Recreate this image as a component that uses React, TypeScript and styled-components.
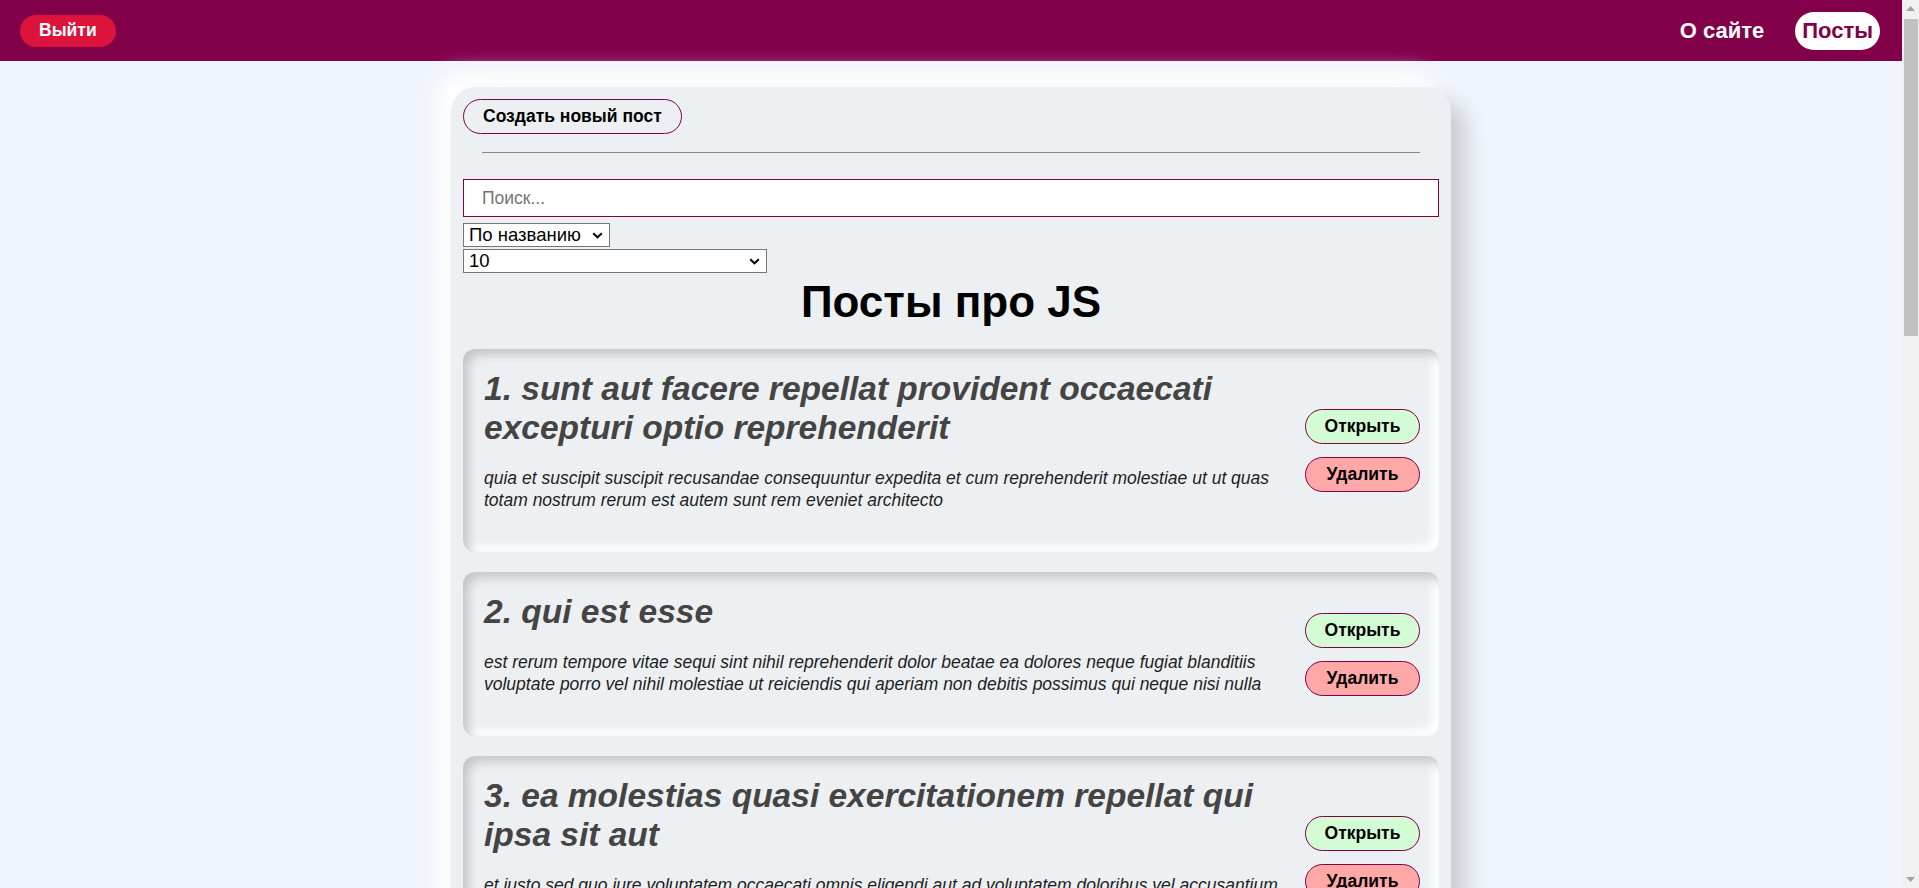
import React from "react";
import styled, { createGlobalStyle } from "styled-components";

const GlobalStyle = createGlobalStyle`
  html, body {
    margin: 0;
    padding: 0;
  }
  html::-webkit-scrollbar {
    display: none;
  }
  body {
    background: #f0f4fc;
    font-family: "Liberation Sans", Arial, sans-serif;
    color: #000;
  }
  * {
    box-sizing: border-box;
  }
`;

const MAROON = "#82004a";

const Shell = styled.div`
  display: flex;
  align-items: flex-start;
`;

const Page = styled.div`
  flex: 1;
  min-width: 0;
`;

const ScrollBar = styled.aside`
  position: sticky;
  top: 0;
  flex: 0 0 17px;
  height: 100vh;
  display: flex;
  flex-direction: column;
  background: #f1f1f1;
`;

const ScrollArrow = styled.div`
  height: 17px;
  display: flex;
  align-items: center;
  justify-content: center;
`;

const ScrollTrack = styled.div`
  flex: 1;
  padding: 2px 1px 0 2px;
`;

const ScrollThumb = styled.div`
  height: 317px;
  background: #c1c1c1;
`;

const Header = styled.header`
  height: 61px;
  background: ${MAROON};
  display: flex;
  align-items: center;
  justify-content: space-between;
  padding: 0 22px 0 20px;
`;

const LogoutButton = styled.button`
  height: 32px;
  padding: 0 19px;
  border: none;
  border-radius: 16px;
  background: #dc143c;
  color: #fff;
  font-family: inherit;
  font-weight: 700;
  font-size: 17.5px;
  cursor: pointer;
`;

const Nav = styled.nav`
  display: flex;
  align-items: center;
  gap: 31px;
`;

const NavLink = styled.a<{ $active?: boolean }>`
  display: flex;
  align-items: center;
  height: 38px;
  padding: 0 ${(p) => (p.$active ? "7px" : "0")};
  border-radius: 19px;
  background: ${(p) => (p.$active ? "#fff" : "transparent")};
  color: ${(p) => (p.$active ? MAROON : "#fff")};
  font-weight: 700;
  font-size: 22px;
  text-decoration: none;
  cursor: pointer;
`;

const Card = styled.main`
  width: 1000px;
  margin: 26px auto 40px;
  padding: 12px;
  background: #ecf0f3;
  border-radius: 25px;
  box-shadow: 14px 14px 22px #c8cbd0, -14px -14px 22px #ffffff;
`;

const CreateButton = styled.button`
  height: 35px;
  padding: 0 19px;
  background: transparent;
  border: 1px solid ${MAROON};
  border-radius: 18px;
  font-family: inherit;
  font-weight: 700;
  font-size: 17.5px;
  color: #000;
  cursor: pointer;
`;

const Divider = styled.hr`
  margin: 18px 19px 26px;
  border: none;
  border-top: 1px solid #8a8a8a;
  height: 0;
`;

const SearchInput = styled.input`
  display: block;
  width: 100%;
  height: 38px;
  padding: 0 18px;
  border: 1px solid ${MAROON};
  background: #fff;
  font-family: inherit;
  font-size: 17.5px;
  outline: none;
  &::placeholder {
    color: #757575;
  }
`;

const SelectWrap = styled.div<{ $w: number; $mt: number }>`
  position: relative;
  width: ${(p) => p.$w}px;
  height: 24px;
  margin-top: ${(p) => p.$mt}px;
`;

const Select = styled.select`
  display: block;
  width: 100%;
  height: 100%;
  margin: 0;
  padding: 0 24px 0 5px;
  appearance: none;
  -webkit-appearance: none;
  font-family: inherit;
  font-size: 18.5px;
  line-height: 22px;
  color: #000;
  background: #fff;
  border: 1px solid #767676;
  border-radius: 0;
  outline: none;
`;

const Chevron = styled.svg`
  position: absolute;
  right: 7px;
  top: 9px;
  width: 11px;
  height: 7px;
  pointer-events: none;
`;

const Title = styled.h1`
  margin: 4px 0 22px;
  text-align: center;
  font-size: 44px;
  font-weight: 700;
  line-height: 50px;
`;

const PostList = styled.div`
  display: flex;
  flex-direction: column;
  gap: 20px;
`;

const Post = styled.article`
  display: flex;
  align-items: center;
  padding: 20px 19px 20px 21px;
  background: #ecf0f3;
  border-radius: 12px;
  box-shadow: inset 6px 6px 10px #c5c8cc, inset -6px -6px 10px #ffffff;
`;

const PostContent = styled.div`
  flex: 1;
  min-width: 0;
`;

const PostTitle = styled.h2`
  margin: 0;
  font-size: 33.5px;
  line-height: 39px;
  font-style: italic;
  font-weight: 700;
  color: #444;
`;

const PostBody = styled.p`
  margin: 20px 0 21px;
  font-size: 17.5px;
  line-height: 22px;
  font-style: italic;
  color: #1e1e1e;
`;

const Actions = styled.div`
  display: flex;
  flex-direction: column;
  gap: 13px;
  margin-left: 15px;
`;

const ActionButton = styled.button<{ $variant: "open" | "delete" }>`
  width: 115px;
  height: 35px;
  border: 1px solid ${MAROON};
  border-radius: 18px;
  background: ${(p) => (p.$variant === "open" ? "#d4fcd4" : "#ffa8a8")};
  font-family: inherit;
  font-weight: 700;
  font-size: 17.5px;
  color: #000;
  cursor: pointer;
`;

const posts = [
  {
    id: 1,
    title: "sunt aut facere repellat provident occaecati excepturi optio reprehenderit",
    body: "quia et suscipit suscipit recusandae consequuntur expedita et cum reprehenderit molestiae ut ut quas totam nostrum rerum est autem sunt rem eveniet architecto",
  },
  {
    id: 2,
    title: "qui est esse",
    body: "est rerum tempore vitae sequi sint nihil reprehenderit dolor beatae ea dolores neque fugiat blanditiis voluptate porro vel nihil molestiae ut reiciendis qui aperiam non debitis possimus qui neque nisi nulla",
  },
  {
    id: 3,
    title: "ea molestias quasi exercitationem repellat qui ipsa sit aut",
    body: "et iusto sed quo iure voluptatem occaecati omnis eligendi aut ad voluptatem doloribus vel accusantium quis pariatur molestiae porro eius odio et labore et velit aut",
  },
  {
    id: 4,
    title: "eum et est occaecati",
    body: "ullam et saepe reiciendis voluptatem adipisci sit amet autem assumenda provident rerum culpa quis hic commodi nesciunt rem tenetur doloremque ipsam iure quis sunt voluptatem rerum illo velit",
  },
  {
    id: 5,
    title: "nesciunt quas odio",
    body: "repudiandae veniam quaerat sunt sed alias aut fugiat sit autem sed est voluptatem omnis possimus esse voluptatibus quis est aut tenetur dolor neque",
  },
  {
    id: 6,
    title: "dolorem eum magni eos aperiam quia",
    body: "ut aspernatur corporis harum nihil quis provident sequi mollitia nobis aliquid molestiae perspiciatis et ea nemo ab reprehenderit accusantium quas voluptate dolores velit et doloremque molestiae",
  },
  {
    id: 7,
    title: "magnam facilis autem",
    body: "dolore placeat quibusdam ea quo vitae magni quis enim qui quis quo nemo aut saepe quidem repellat excepturi ut quia sunt ut sequi eos ea sed quas",
  },
  {
    id: 8,
    title: "dolorem dolore est ipsam",
    body: "dignissimos aperiam dolorem qui eum facilis quibusdam animi sint suscipit qui sint possimus cum quaerat magni maiores excepturi ipsam ut commodi dolor voluptatum modi aut vitae",
  },
  {
    id: 9,
    title: "nesciunt iure omnis dolorem tempora et accusantium",
    body: "consectetur animi nesciunt iure dolore enim quia ad veniam autem ut quam aut nobis et est aut quod aut provident voluptas autem voluptas",
  },
  {
    id: 10,
    title: "optio molestias id quia eum",
    body: "quo et expedita modi cum officia vel magni doloribus qui repudiandae vero nisi sit quos veniam quod sed accusamus veritatis error",
  },
];

function ChevronIcon() {
  return (
    <Chevron viewBox="0 0 11 7" aria-hidden="true">
      <path d="M1.2 1.2 L5.5 5.3 L9.8 1.2" fill="none" stroke="#000" strokeWidth="2" />
    </Chevron>
  );
}

function ArrowIcon({ down }: { down?: boolean }) {
  return (
    <svg width="9" height="5" viewBox="0 0 9 5" aria-hidden="true">
      <polygon points={down ? "0,0 9,0 4.5,5" : "0,5 9,5 4.5,0"} fill="#a3a3a3" />
    </svg>
  );
}

export default function App() {
  return (
    <>
      <GlobalStyle />
      <Shell>
        <Page>
          <Header>
            <LogoutButton>Выйти</LogoutButton>
            <Nav>
              <NavLink>О сайте</NavLink>
              <NavLink $active>Посты</NavLink>
            </Nav>
          </Header>
          <Card>
            <CreateButton>Создать новый пост</CreateButton>
            <Divider />
            <SearchInput placeholder="Поиск..." />
            <SelectWrap $w={147} $mt={6}>
              <Select defaultValue="title">
                <option value="title">По названию</option>
                <option value="body">По описанию</option>
              </Select>
              <ChevronIcon />
            </SelectWrap>
            <SelectWrap $w={304} $mt={2}>
              <Select defaultValue="10">
                <option value="5">5</option>
                <option value="10">10</option>
                <option value="25">25</option>
                <option value="-1">Показать все</option>
              </Select>
              <ChevronIcon />
            </SelectWrap>
            <Title>Посты про JS</Title>
            <PostList>
              {posts.map((p) => (
                <Post key={p.id}>
                  <PostContent>
                    <PostTitle>
                      {p.id}. {p.title}
                    </PostTitle>
                    <PostBody>{p.body}</PostBody>
                  </PostContent>
                  <Actions>
                    <ActionButton $variant="open">Открыть</ActionButton>
                    <ActionButton $variant="delete">Удалить</ActionButton>
                  </Actions>
                </Post>
              ))}
            </PostList>
          </Card>
        </Page>
        <ScrollBar aria-hidden="true">
          <ScrollArrow>
            <ArrowIcon />
          </ScrollArrow>
          <ScrollTrack>
            <ScrollThumb />
          </ScrollTrack>
          <ScrollArrow>
            <ArrowIcon down />
          </ScrollArrow>
        </ScrollBar>
      </Shell>
    </>
  );
}
